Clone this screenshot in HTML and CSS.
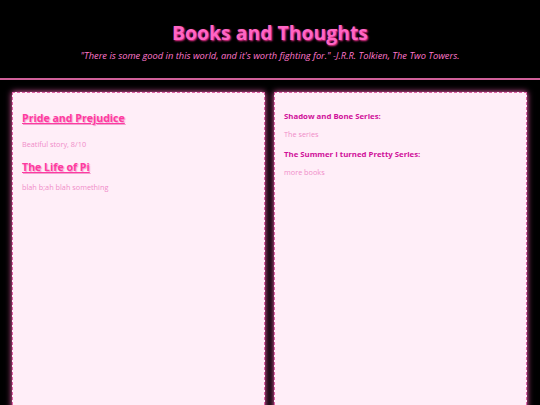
FILE: index.html
```html
<!DOCTYPE html>
<html>
<head>
<meta charset="utf-8">
<link rel="stylesheet" href="styles.css">
</head>
<body>
<header class="site-header">
  <h1 class="title">Books and Thoughts</h1>
  <p class="quote">"There is some good in this world, and it's worth fighting for." -J.R.R. Tolkien, The Two Towers.</p>
</header>
<hr class="divider">
<main class="columns">
  <section class="panel">
    <h2 class="book"><a href="#">Pride and Prejudice</a></h2>
    <p class="note note-first">Beatiful story, 8/10</p>
    <h2 class="book"><a href="#">The Life of Pi</a></h2>
    <p class="note">blah b;ah blah something</p>
  </section>
  <section class="panel">
    <h3 class="series">Shadow and Bone Series:</h3>
    <p class="note">The series</p>
    <h3 class="series">The Summer I turned Pretty Series:</h3>
    <p class="note">more books</p>
  </section>
</main>
</body>
</html>
```
FILE: styles.css
```css
html, body {
  margin: 0;
  padding: 0;
  height: 100%;
}
body {
  background: #000;
  font-family: "Comic Sans MS", "Open Sans", sans-serif;
  overflow: hidden;
  display: flex;
  flex-direction: column;
}
.site-header {
  text-align: center;
  padding-top: 20px;
}
.title {
  margin: 0;
  font-size: 19.4px;
  font-weight: bold;
  color: #ff66c4;
  text-shadow: 1px 1px 2px #ff3399;
  line-height: 26px;
}
.quote {
  margin: 4px 0 0;
  font-size: 9.3px;
  font-style: italic;
  color: #ff77cc;
  line-height: 12px;
}
.divider {
  margin: 16px 0 0;
  border: 0;
  height: 2px;
  background: #d0609a;
}
.columns {
  flex: 1;
  display: flex;
  gap: 9px;
  padding: 12px 13px 0 12px;
  margin-bottom: -20px;
}
.panel {
  flex: 1;
  background: #ffeef8;
  border: 1px dashed #e060a8;
  box-shadow: 0 0 6px #ff66bb;
  padding: 12px 9px;
}
.book {
  margin: 5px 0 0;
  font-size: 10.6px;
  font-weight: bold;
  line-height: 16px;
}
.book a {
  color: #ff3aa0;
  text-decoration: underline;
  text-shadow: 1px 1px 1px #f0a0d0;
}
.note {
  margin: 8px 0 8px;
  font-size: 7.3px;
  color: #f08cc8;
  line-height: 9px;
}
.note-first {
  margin: 14px 0 10px;
}
.series {
  margin: 5px 0 0;
  font-size: 7.8px;
  font-weight: bold;
  color: #d0109a;
  line-height: 12px;
}
.series + .note {
  margin: 7.5px 0 9.5px;
}
```
